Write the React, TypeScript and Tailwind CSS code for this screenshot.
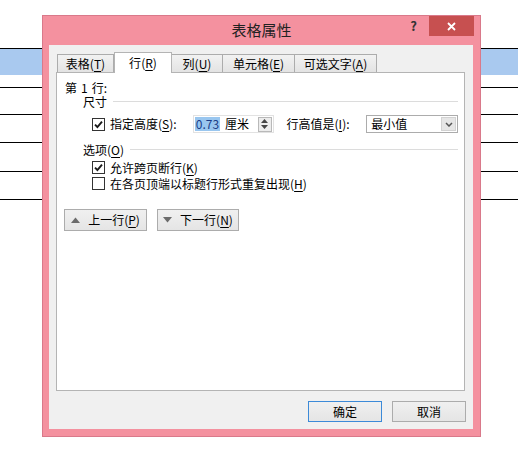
import React from "react";

const K = ({ c }: { c: string }) => (
  <>
    (<span className="underline underline-offset-2">{c}</span>)
  </>
);

const Box = ({ on }: { on?: boolean }) => (
  <span className="w-[13px] h-[13px] shrink-0 border border-[#333333] bg-white flex items-center justify-center">
    {on && (
      <svg width="9" height="9" viewBox="0 0 9 9">
        <path d="M1 4.6 L3.4 7 L8 1.6" stroke="#1a1a1a" strokeWidth="1.9" fill="none" />
      </svg>
    )}
  </span>
);

const Tri = ({ down }: { down?: boolean }) => (
  <svg width="9" height="6" viewBox="0 0 9 6">
    <path d={down ? "M0 0 H9 L4.5 5.5 Z" : "M0 6 H9 L4.5 0.5 Z"} fill="#6b6b6b" />
  </svg>
);

const Tab = ({ label, k, w, active }: { label: string; k: string; w: string; active?: boolean }) => (
  <div
    className={
      active
        ? `${w} h-[21px] -mb-px relative z-10 bg-white border-x border-t border-[#b4b4b4] flex items-center justify-center`
        : `${w} h-[18px] -ml-px bg-gradient-to-b from-[#f2f2f2] to-[#e3e3e3] border border-b-0 border-[#acacac] flex items-center justify-center`
    }
  >
    {label}
    <K c={k} />
  </div>
);

const Section = ({ children }: { children: React.ReactNode }) => (
  <div className="h-[13px] ml-[18px] flex items-center">
    <span className="leading-[13px]">{children}</span>
    <div className="flex-1 ml-[6px] border-t border-[#dcdcdc]" />
  </div>
);

const Btn = ({ children, w, def }: { children: React.ReactNode; w: string; def?: boolean }) => (
  <div
    className={`${w} flex items-center justify-center border ${
      def ? "border-[#3c8ad8]" : "border-[#acacac]"
    } bg-gradient-to-b from-[#f0f0f0] to-[#e5e5e5]`}
  >
    {children}
  </div>
);

export default function App() {
  return (
    <div className="relative w-[518px] h-[453px] overflow-hidden bg-white text-[12px] text-black font-['Noto_Sans_CJK_SC','Noto_Sans',sans-serif]">
      {/* background table */}
      <div className="pt-[48px]">
        <div className="h-[27px] border-t border-black bg-[#a9c9ef]" />
        <div className="h-[12px]" />
        <div className="h-[27px] border-t border-black" />
        <div className="h-[28px] border-t border-black" />
        <div className="h-[29px] border-t border-black" />
        <div className="h-[28px] border-t border-black" />
        <div className="border-t border-black" />
      </div>

      {/* dialog window */}
      <div className="absolute left-[42px] top-[15px] w-[439px] h-[422px] bg-[#f4919f] border border-[#d9798a] flex flex-col">
        <div className="h-[29px] grid grid-cols-[1fr_auto_1fr]">
          <div />
          <div className="flex items-center text-[15px] text-[#222]">表格属性</div>
          <div className="flex justify-end items-start">
            <span className="mr-[12px] h-[20px] flex items-center text-[13px] font-bold text-[#333]">?</span>
            <div className="w-[45px] h-[20px] mr-[6px] bg-[#c75050] flex items-center justify-center">
              <svg width="9" height="9" viewBox="0 0 9 9">
                <path d="M1 1 L8 8 M8 1 L1 8" stroke="white" strokeWidth="1.8" />
              </svg>
            </div>
          </div>
        </div>

        {/* client area */}
        <div className="ml-[6px] w-[424px] h-[384px] bg-[#f0f0f0] pt-[7px] flex flex-col">
          <div className="h-[20px] pl-[9px] flex items-end">
            <Tab label="表格" k="T" w="w-[57px]" />
            <Tab label="行" k="R" w="w-[58px]" active />
            <Tab label="列" k="U" w="w-[52px]" />
            <Tab label="单元格" k="E" w="w-[73px]" />
            <Tab label="可选文字" k="A" w="w-[83px]" />
          </div>

          <div className="ml-[7px] w-[409px] h-[319px] border border-[#b4b4b4] bg-white pl-[8px] pr-[6px] pt-[8px] flex flex-col">
            <div className="h-[13px] leading-[13px] flex">
              <span>第</span>
              <span className="mx-[4px]">1</span>
              <span>行:</span>
            </div>
            <div className="mt-[1px]">
              <Section>尺寸</Section>
            </div>

            <div className="mt-[7px] h-[18px] flex items-center">
              <div className="ml-[27px] mr-[5px]">
                <Box on />
              </div>
              <span className="w-[83px]">
                指定高度<K c="S" />:
              </span>
              <div className="w-[81px] h-[18px] border border-[#e2e2e2] flex items-center">
                <span className="ml-[1px] px-[1px] bg-[#99c6ef] text-[#1b3d86] leading-[14px]">0.73</span>
                <span className="ml-[5px]">厘米</span>
                <div className="ml-auto mr-[1px] w-[14px] h-[15px] border border-[#b9b9b9] bg-[#ececec] flex flex-col items-center justify-center gap-[2px]">
                  <svg width="7" height="4" viewBox="0 0 7 4">
                    <path d="M0 4 H7 L3.5 0 Z" fill="#444" />
                  </svg>
                  <svg width="7" height="4" viewBox="0 0 7 4">
                    <path d="M0 0 H7 L3.5 4 Z" fill="#444" />
                  </svg>
                </div>
              </div>
              <span className="ml-[13px] w-[80px]">
                行高值是<K c="I" />:
              </span>
              <div className="w-[92px] h-[18px] border border-[#acacac] bg-white flex items-center">
                <span className="ml-[4px]">最小值</span>
                <div className="ml-auto mr-[1px] w-[15px] h-[14px] bg-[#e6e6e6] border border-[#d2d2d2] flex items-center justify-center">
                  <svg width="8" height="5" viewBox="0 0 8 5">
                    <path d="M1 1 L4 4 L7 1" stroke="#555" strokeWidth="1.5" fill="none" />
                  </svg>
                </div>
              </div>
            </div>

            <div className="mt-[10px]">
              <Section>
                选项<K c="O" />
              </Section>
            </div>

            <div className="mt-[4px] h-[15px] flex items-center">
              <div className="ml-[27px] mr-[5px]">
                <Box on />
              </div>
              <span>
                允许跨页断行<K c="K" />
              </span>
            </div>
            <div className="mt-[1px] h-[15px] flex items-center">
              <div className="ml-[27px] mr-[5px]">
                <Box />
              </div>
              <span>
                在各页顶端以标题行形式重复出现<K c="H" />
              </span>
            </div>

            <div className="mt-[18px] -ml-px flex gap-[10px] h-[22px]">
              <Btn w="w-[83px]">
                <Tri />
                <span className="ml-[8px]">
                  上一行<K c="P" />
                </span>
              </Btn>
              <Btn w="w-[82px]">
                <Tri down />
                <span className="ml-[8px]">
                  下一行<K c="N" />
                </span>
              </Btn>
            </div>
          </div>

          <div className="mt-[10px] pr-[7px] flex justify-end gap-[10px] h-[21px]">
            <Btn w="w-[74px]" def>
              确定
            </Btn>
            <Btn w="w-[74px]">取消</Btn>
          </div>
        </div>
      </div>
    </div>
  );
}
